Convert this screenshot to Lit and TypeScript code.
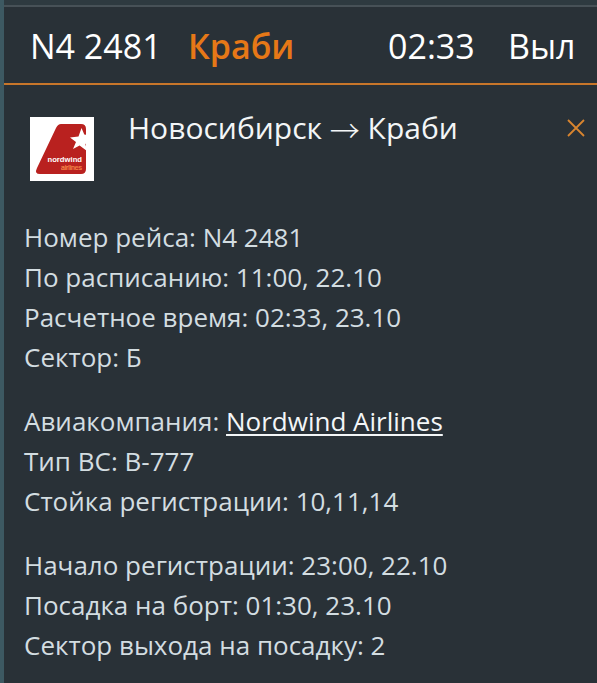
import { LitElement, html, css } from 'lit';
import { customElement, property } from 'lit/decorators.js';

interface DetailRow {
  label: string;
  value: string;
  link?: boolean;
}

/**
 * Airline logo tile
 */
@customElement('airline-logo')
export class AirlineLogo extends LitElement {
  static styles = css`
    :host {
      display: block;
      width: 64px;
      height: 64px;
      background: #fff;
    }

    svg {
      display: block;
    }

    text {
      font-family: 'Liberation Sans', sans-serif;
      font-size: 7px;
    }

    .name {
      fill: #fff;
      font-weight: 700;
    }

    .kind {
      fill: #f58a4a;
      stroke: #f58a4a;
      stroke-width: 0.2px;
    }
  `;

  render() {
    return html`
      <svg width="64" height="64" viewBox="0 0 64 64">
        <path
          d="M31 7 H51 Q56 7 56 12 V52 Q56 57 51 57 H10 Q4 57 7 51 L26 11 Q28 7 31 7 Z"
          fill="#b9211f"
        />
        <path
          d="M51.5 11 L54.3 17.5 L57 18 V26 L55.4 27 L57 34 L49.6 28.4 L43 32 L46 25 L40 20.5 L48.5 19.5 Z"
          fill="#fff"
        />
        <text class="name" x="17.5" y="44.7" textLength="34.5" lengthAdjust="spacingAndGlyphs">nordwind</text>
        <text class="kind" x="31" y="53" textLength="21">airlines</text>
      </svg>
    `;
  }
}

@customElement('app-root')
export class AppRoot extends LitElement {
  static styles = css`
    :host {
      display: block;
      box-sizing: border-box;
      height: 683px;
      overflow: hidden;
      border-left: 4px solid #3d5962;
      background: #293137;
      color: #d3dde1;
      font-family: 'Open Sans', 'Noto Sans', sans-serif;
      white-space: nowrap;
    }

    .top-line {
      height: 5px;
      background: #2e3a40;
      border-bottom: 2px solid #475157;
    }

    .summary {
      display: grid;
      grid-template-columns: 158px 200px 120px 1fr;
      box-sizing: border-box;
      height: 78px;
      padding-left: 26px;
      border-bottom: 2px solid #c8762a;
      color: #fff;
      font-size: 34px;
      line-height: 79px;
    }

    .city {
      color: #e67817;
      font-weight: 600;
    }

    .route {
      display: grid;
      grid-template-columns: 98px 1fr auto;
      align-items: start;
      height: 100px;
      padding: 32px 12px 0 26px;
    }

    .route-title {
      margin-top: -9px;
      color: #f3f6f7;
      font-size: 30px;
      line-height: 40px;
    }

    .arrow {
      font-family: 'Noto Sans CJK SC', sans-serif;
      font-weight: 300;
      line-height: 1;
      vertical-align: -3px;
    }

    .close {
      display: block;
      margin-top: 2px;
      padding: 0;
      border: none;
      background: none;
      cursor: pointer;
    }

    .close svg {
      display: block;
    }

    .details {
      display: flex;
      flex-direction: column;
      gap: 24px;
      padding-left: 20px;
      font-size: 26px;
      line-height: 40px;
    }

    a {
      color: #f3f6f7;
      text-decoration: underline;
      text-decoration-thickness: 2px;
      text-underline-offset: 3px;
      text-decoration-skip-ink: none;
    }
  `;

  @property({ type: Array })
  groups: DetailRow[][] = [
    [
      { label: 'Номер рейса', value: 'N4 2481' },
      { label: 'По расписанию', value: '11:00, 22.10' },
      { label: 'Расчетное время', value: '02:33, 23.10' },
      { label: 'Сектор', value: 'Б' },
    ],
    [
      { label: 'Авиакомпания', value: 'Nordwind Airlines', link: true },
      { label: 'Тип ВС', value: 'B-777' },
      { label: 'Стойка регистрации', value: '10,11,14' },
    ],
    [
      { label: 'Начало регистрации', value: '23:00, 22.10' },
      { label: 'Посадка на борт', value: '01:30, 23.10' },
      { label: 'Сектор выхода на посадку', value: '2' },
    ],
  ];

  render() {
    return html`
      <div class="top-line"></div>
      <div class="summary">
        <span>N4 2481</span>
        <span class="city">Краби</span>
        <span>02:33</span>
        <span>Выл</span>
      </div>
      <div class="route">
        <airline-logo></airline-logo>
        <div class="route-title">Новосибирск <span class="arrow">→</span> Краби</div>
        <button class="close" aria-label="Закрыть">
          <svg width="18" height="18" viewBox="0 0 18 18">
            <path d="M1 1 L17 17 M17 1 L1 17" stroke="#d8852f" stroke-width="1.8" />
          </svg>
        </button>
      </div>
      <div class="details">
        ${this.groups.map(
          (rows) => html`<div>${rows.map((row) => this._renderRow(row))}</div>`
        )}
      </div>
    `;
  }

  private _renderRow(row: DetailRow) {
    return html`
      <div>${row.label}: ${row.link ? html`<a href="#">${row.value}</a>` : row.value}</div>
    `;
  }
}

declare global {
  interface HTMLElementTagNameMap {
    'airline-logo': AirlineLogo;
    'app-root': AppRoot;
  }
}
